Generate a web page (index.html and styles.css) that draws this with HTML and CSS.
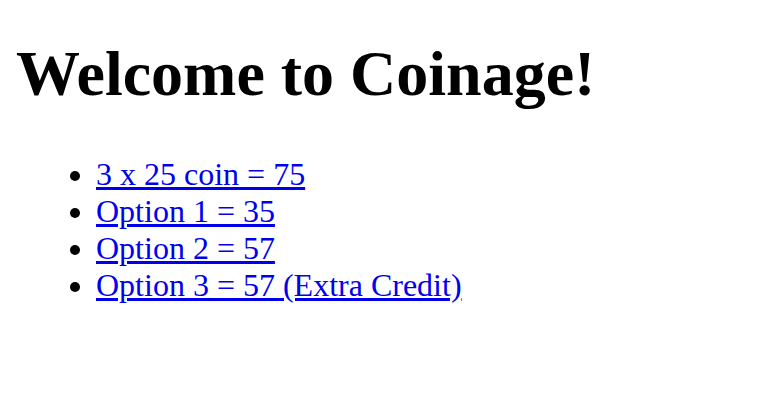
FILE: index.html
```html
<!DOCTYPE html>
<html>
<head>
<meta charset="utf-8">
<link rel="stylesheet" href="styles.css">
</head>
<body>
<h1 class="title">Welcome to Coinage!</h1>
<ul class="options">
  <li><a href="#">3 x 25 coin = 75</a></li>
  <li><a href="#">Option 1 = 35</a></li>
  <li><a href="#">Option 2 = 57</a></li>
  <li><a href="#">Option 3 = 57 (Extra Credit)</a></li>
</ul>
</body>
</html>
```
FILE: styles.css
```css
body {
  margin: 16px;
  font-family: "Liberation Serif", "Times New Roman", serif;
  background: #fff;
  color: #000;
}
.title {
  font-size: 64px;
  font-weight: bold;
  margin: 21px 0 45px;
}
.options {
  font-size: 32px;
  margin: 0;
  padding-left: 80px;
}
.options a {
  color: #0000ee;
}
```
